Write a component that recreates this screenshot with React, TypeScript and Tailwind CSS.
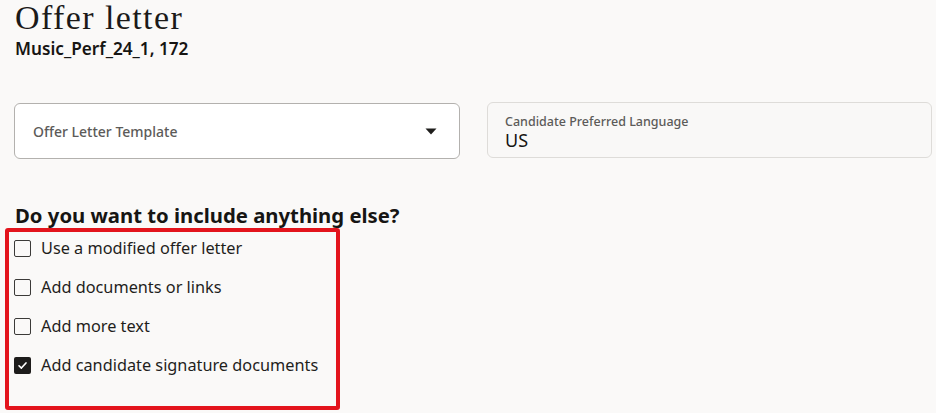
import React from "react";

const sans = { fontFamily: '"Noto Sans", "Open Sans", sans-serif' };

function Box({ checked }: { checked?: boolean }) {
  if (checked) {
    return (
      <div className="w-[17px] h-[17px] rounded-[2px] bg-[#1d1c1b] flex items-center justify-center shrink-0">
        <svg width="11" height="11" viewBox="0 0 12 12" fill="none">
          <path d="M2.2 6.3 L4.8 8.8 L9.8 3.2" stroke="#fff" strokeWidth="1.8" strokeLinecap="round" strokeLinejoin="round" />
        </svg>
      </div>
    );
  }
  return <div className="w-[17px] h-[17px] rounded-[2px] border-[1.5px] border-[#3b3a38] bg-transparent shrink-0" />;
}

function Row({ label, checked }: { label: string; checked?: boolean }) {
  return (
    <div className="flex items-center h-[24px] gap-[10px]">
      <Box checked={checked} />
      <span className="text-[16.3px] text-[#1f1e1c] leading-[24px]">{label}</span>
    </div>
  );
}

export default function App() {
  return (
    <div className="w-[936px] h-[413px] bg-[#faf9f8] overflow-hidden relative" style={sans}>
      <div className="pl-[15px]">
        <h1
          className="mt-[1px] text-[34px] leading-[34px] tracking-[1.4px] text-[#1b1a19]"
          style={{ fontFamily: '"Liberation Serif", "DejaVu Serif", serif' }}
        >
          Offer letter
        </h1>
        <div className="mt-[4px] text-[17.2px] leading-[20px] font-semibold text-[#161513]">Music_Perf_24_1, 172</div>
      </div>

      <div className="mt-[44px] flex gap-[27px] pl-[14px] pr-[4px]">
        <div className="w-[446px] h-[56px] bg-white border border-[#b3b1ae] rounded-[6px] flex items-center justify-between pl-[18px] pr-[22px] pt-[1px]">
          <span className="text-[14px] font-medium text-[#5c5b59]">Offer Letter Template</span>
          <svg width="12" height="7" viewBox="0 0 12 7">
            <path d="M0.5 0.5 H11.5 L6 6.5 Z" fill="#1f1e1c" />
          </svg>
        </div>
        <div className="w-[445px] h-[56px] bg-[#f9f8f7] border border-[#dedcd9] rounded-[6px] flex flex-col justify-center pl-[17px] pt-[3px] -mt-[1px]">
          <span className="text-[12.5px] leading-[16px] font-medium text-[#5c5b59]">Candidate Preferred Language</span>
          <span className="text-[18px] leading-[20px] text-[#161513]">US</span>
        </div>
      </div>

      <div className="pl-[15px] mt-[44px] text-[20.3px] leading-[24px] font-bold text-[#161513]">
        Do you want to include anything else?
      </div>

      <div className="ml-[5px] mt-[1px] w-[335px] h-[182px] border-[4px] border-[#e3141c] rounded-[3px] pl-[5px] pt-[4px] flex flex-col gap-[15px]">
        <Row label="Use a modified offer letter" />
        <Row label="Add documents or links" />
        <Row label="Add more text" />
        <Row label="Add candidate signature documents" checked />
      </div>
    </div>
  );
}
